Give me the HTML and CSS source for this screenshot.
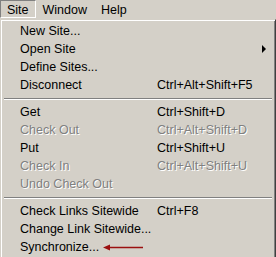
FILE: index.html
```html
<!DOCTYPE html>
<html lang="en">
<head>
  <meta charset="UTF-8" />
  <title>Site menu</title>
  <link rel="stylesheet" href="styles.css">
</head>
<body>
  <div class="menubar">
    <span class="top-item active">Site</span>
    <span class="top-item">Window</span>
    <span class="top-item">Help</span>
  </div>
  <div class="menu">
    <ul class="items">
      <li class="item"><span class="label">New Site...</span></li>
      <li class="item"><span class="label">Open Site</span><span class="key"></span><span class="sub-arrow"></span></li>
      <li class="item"><span class="label">Define Sites...</span></li>
      <li class="item"><span class="label">Disconnect</span><span class="key">Ctrl+Alt+Shift+F5</span></li>
      <li class="sep"></li>
      <li class="item"><span class="label">Get</span><span class="key">Ctrl+Shift+D</span></li>
      <li class="item disabled"><span class="label">Check Out</span><span class="key">Ctrl+Alt+Shift+D</span></li>
      <li class="item"><span class="label">Put</span><span class="key">Ctrl+Shift+U</span></li>
      <li class="item disabled"><span class="label">Check In</span><span class="key">Ctrl+Alt+Shift+U</span></li>
      <li class="item disabled"><span class="label">Undo Check Out</span></li>
      <li class="sep"></li>
      <li class="item"><span class="label">Check Links Sitewide</span><span class="key">Ctrl+F8</span></li>
      <li class="item"><span class="label">Change Link Sitewide...</span></li>
      <li class="item">
        <span class="label">Synchronize...
          <svg class="pointer" width="40" height="7" viewBox="0 0 40 7">
            <polygon points="0,3.5 7,0.5 7,6.5" fill="#9b1010"/>
            <line x1="6" y1="3.5" x2="40" y2="3.5" stroke="#9b1010" stroke-width="1.4"/>
          </svg>
        </span>
      </li>
    </ul>
  </div>
</body>
</html>
```

FILE: styles.css
```css
body {
    margin: 0;
    background-color: #d4d0c8;
    font-family: "Liberation Sans", Arial, sans-serif;
    font-size: 12.5px;
    color: #000;
    overflow: hidden;
    height: 257px;
}

.menubar {
    display: flex;
    align-items: flex-start;
    height: 19px;
}

.top-item {
    padding: 2px 6px 0 6px;
    line-height: 14px;
    border: 1px solid transparent;
}

.top-item.active {
    border-color: #808080 #fff #fff #808080;
}

.menu {
    border-style: solid;
    border-width: 1px;
    border-color: #d4d0c8 #404040 #404040 #d4d0c8;
    box-shadow: inset 1px 1px 0 #fff, inset -1px -1px 0 #808080;
    padding: 2px 2px 20px 2px;
}

.items {
    list-style: none;
    margin: 0;
    padding: 0;
}

.item {
    display: flex;
    align-items: center;
    height: 18px;
    padding-left: 17px;
    white-space: nowrap;
}

.label {
    width: 137px;
    display: flex;
    align-items: center;
}

.key {
    flex: 1;
}

.sub-arrow {
    width: 0;
    height: 0;
    border-left: 4px solid #000;
    border-top: 4px solid transparent;
    border-bottom: 4px solid transparent;
    margin-right: 7px;
}

.disabled {
    color: #808080;
    text-shadow: 1px 1px 0 #fff;
}

.sep {
    height: 9px;
    margin: 0 1px;
    display: flex;
    flex-direction: column;
    justify-content: center;
}

.sep::before {
    content: "";
    display: block;
    height: 1px;
    background-color: #808080;
    border-bottom: 1px solid #fff;
}

.pointer {
    margin-left: 4px;
    flex: none;
}
```
